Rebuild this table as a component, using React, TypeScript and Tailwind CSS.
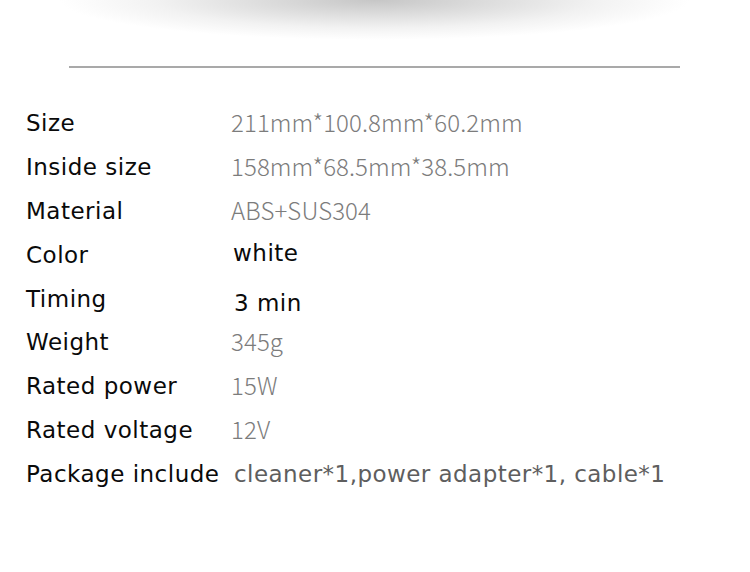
import React from "react";

const rows: { label: string; value: string; kind: "light" | "dark" | "gray" }[] = [
  { label: "Size", value: "211mm*100.8mm*60.2mm", kind: "light" },
  { label: "Inside size", value: "158mm*68.5mm*38.5mm", kind: "light" },
  { label: "Material", value: "ABS+SUS304", kind: "light" },
  { label: "Color", value: "white", kind: "dark" },
  { label: "Timing", value: "3 min", kind: "dark" },
  { label: "Weight", value: "345g", kind: "light" },
  { label: "Rated power", value: "15W", kind: "light" },
  { label: "Rated voltage", value: "12V", kind: "light" },
  { label: "Package include", value: "cleaner*1,power adapter*1, cable*1", kind: "gray" },
];

const labelFont = { fontFamily: '"DejaVu Sans", Verdana, sans-serif' };
const valueFont = { fontFamily: '"Noto Sans CJK SC", "Noto Sans", sans-serif' };

export default function App() {
  return (
    <div className="w-[750px] h-[572px] bg-white overflow-hidden">
      <div className="h-[42px] bg-[radial-gradient(ellipse_42%_95%_at_50%_0%,#c6c6c6_0%,#dcdcdc_35%,#f2f2f2_70%,#ffffff_100%)]" />
      <div className="mt-[24px] mx-[69px] h-[2px] bg-[#a9a9a9] w-[611px]" />
      <div className="mt-[34px] pl-[26px] flex flex-col">
        {rows.map((r) => (
          <div key={r.label} className="flex items-center h-[43.8px]">
            <div className="w-[205px] text-[23px] tracking-[0.5px] text-[#0a0a0a] leading-none" style={labelFont}>
              {r.label}
            </div>
            {r.kind === "light" && (
              <div className="-mt-[3px] text-[24px] font-extralight tracking-[0.1px] text-[#7c7c7c] leading-none" style={valueFont}>
                {r.value}
              </div>
            )}
            {r.kind === "dark" && (
              <div
                className={`text-[23px] tracking-[0.5px] text-[#0a0a0a] leading-none ${r.value === "3 min" ? "pl-[3px] pt-[8px]" : "pl-[2px] -mt-[4px]"}`}
                style={labelFont}
              >
                {r.value}
              </div>
            )}
            {r.kind === "gray" && (
              <div className="pl-[3px] text-[23px] tracking-[0.45px] text-[#5e5e5e] leading-none" style={labelFont}>
                {r.value}
              </div>
            )}
          </div>
        ))}
      </div>
    </div>
  );
}
